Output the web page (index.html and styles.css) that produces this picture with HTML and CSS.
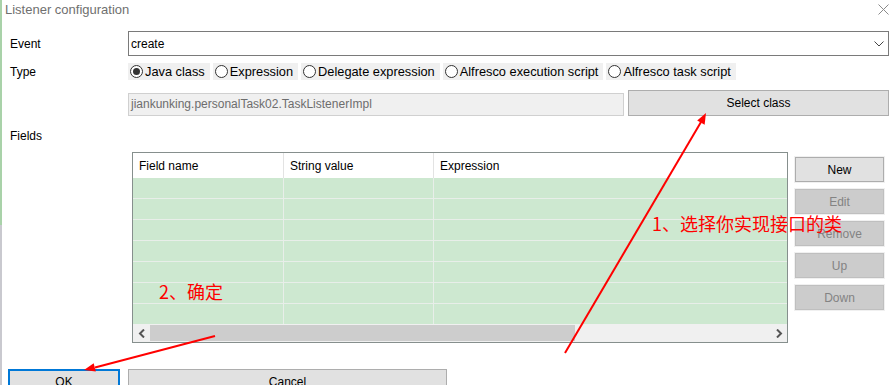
FILE: index.html
```html
<!DOCTYPE html>
<html lang="en">
<head>
    <meta charset="UTF-8">
    <title>Listener configuration</title>
    <link rel="stylesheet" href="styles.css">
</head>
<body>
    <div class="window">
        <div class="edge"></div>
        <div class="dialog">
            <div class="titlebar">
                <span class="title">Listener configuration</span>
                <span class="close">
                    <svg width="11" height="11" viewBox="0 0 11 11"><path d="M0.5 0.5 L10.5 10.5 M10.5 0.5 L0.5 10.5" stroke="#8a8a8a" stroke-width="1" fill="none"/></svg>
                </span>
            </div>

            <div class="form">
                <div class="row row-event">
                    <div class="label">Event</div>
                    <div class="combo">
                        <span>create</span>
                        <svg class="chevron" width="10" height="6" viewBox="0 0 10 6"><path d="M0.5 0.5 L5 5 L9.5 0.5" stroke="#444" stroke-width="1" fill="none"/></svg>
                    </div>
                </div>

                <div class="row row-type">
                    <div class="label">Type</div>
                    <div class="radios">
                        <label class="radio"><span class="dot checked"></span>Java class</label>
                        <label class="radio"><span class="dot"></span>Expression</label>
                        <label class="radio"><span class="dot"></span>Delegate expression</label>
                        <label class="radio"><span class="dot"></span>Alfresco execution script</label>
                        <label class="radio"><span class="dot"></span>Alfresco task script</label>
                    </div>
                </div>

                <div class="row row-class">
                    <div class="label"></div>
                    <div class="class-field">jiankunking.personalTask02.TaskListenerImpl</div>
                    <button class="btn select-btn">Select class</button>
                </div>

                <div class="fields-label">Fields</div>

                <div class="fields-body">
                    <div class="grid">
                        <div class="grid-head">
                            <div class="cell c1">Field name</div>
                            <div class="cell c2">String value</div>
                            <div class="cell c3">Expression</div>
                        </div>
                        <div class="grid-rows" id="rows"></div>
                        <div class="hscroll">
                            <span class="arrow">
                                <svg width="8" height="9" viewBox="0 0 8 9"><path d="M6 0.5 L2 4.5 L6 8.5" stroke="#555" stroke-width="2" fill="none"/></svg>
                            </span>
                            <span class="thumb"></span>
                            <span class="track"></span>
                            <span class="arrow">
                                <svg width="8" height="9" viewBox="0 0 8 9"><path d="M2 0.5 L6 4.5 L2 8.5" stroke="#555" stroke-width="2" fill="none"/></svg>
                            </span>
                        </div>
                    </div>
                    <div class="side-buttons">
                        <button class="btn side">New</button>
                        <button class="btn side disabled">Edit</button>
                        <button class="btn side disabled">Remove</button>
                        <button class="btn side disabled">Up</button>
                        <button class="btn side disabled">Down</button>
                    </div>
                </div>
            </div>

            <div class="footer">
                <button class="btn ok-btn">OK</button>
                <button class="btn cancel-btn">Cancel</button>
            </div>
        </div>
    </div>

    <!-- annotations drawn on top of the screenshot -->
    <svg class="marks" width="895" height="385" viewBox="0 0 895 385">
        <line x1="565" y1="353" x2="701" y2="122" stroke="#ff0000" stroke-width="2"/>
        <polygon points="706,113 704.6,124.8 697.2,120.4" fill="#ff0000"/>
        <line x1="215" y1="336" x2="95" y2="367.5" stroke="#ff0000" stroke-width="2"/>
        <polygon points="84,370 93.7,363.3 95.8,371.6" fill="#ff0000"/>
    </svg>
    <div class="note note-1">1、选择你实现接口的类</div>
    <div class="note note-2">2、确定</div>

    <script>
        const rows = document.getElementById('rows');
        for (let i = 0; i < 7; i++) {
            rows.innerHTML += '<div class="grid-row"><div class="cell c1"></div><div class="cell c2"></div><div class="cell c3"></div></div>';
        }
    </script>
</body>
</html>
```

FILE: styles.css
```css
body {
    margin: 0;
    padding: 0;
    width: 895px;
    height: 385px;
    overflow: hidden;
    background: #fff;
    font-family: "Liberation Sans", Arial, sans-serif;
    font-size: 12px;
    color: #000;
    position: relative;
}
.window {
    display: flex;
    height: 385px;
}
.edge {
    width: 2px;
    border-right: 1px solid #fff;
    background: linear-gradient(#a9d2a9 0, #a9d2a9 225px, #c9c9cf 225px, #c9c9cf 100%);
}
.dialog {
    flex: 1;
    display: flex;
    flex-direction: column;
}
.dialog > * {
    flex-shrink: 0;
}
.titlebar {
    height: 19px;
    display: flex;
    align-items: center;
    justify-content: space-between;
    padding: 0 6px 0 2px;
}
.title {
    color: #6f6f6f;
    font-size: 13px;
}
.close {
    display: flex;
    margin-top: 0;
}
.form {
    padding: 0 6px 0 7px;
}
.row {
    display: flex;
    align-items: center;
}
.label {
    width: 118px;
    flex: none;
}
.row-event {
    margin-top: 12px;
}
.combo {
    flex: 1;
    height: 23px;
    border: 1px solid #7a7a7a;
    display: flex;
    align-items: center;
    justify-content: space-between;
    padding: 0 4px 0 2px;
}
.chevron {
    margin-top: 1px;
}
.row-type {
    margin-top: 7px;
}
.radios {
    display: flex;
    gap: 3px;
}
.radio {
    display: flex;
    align-items: center;
    gap: 2px;
    height: 17px;
    padding: 0 5px 0 2px;
    background: #f0f0f0;
    font-size: 12.8px;
}
.dot {
    width: 11px;
    height: 11px;
    border: 1px solid #333;
    border-radius: 50%;
    background: #fff;
    position: relative;
}
.dot.checked::after {
    content: "";
    position: absolute;
    left: 2px;
    top: 2px;
    width: 7px;
    height: 7px;
    border-radius: 50%;
    background: #333;
}
.row-class {
    margin-top: 10px;
    align-items: flex-start;
    gap: 4px;
}
.row-class .label {
    margin-right: -4px;
}
.class-field {
    width: 492px;
    height: 21px;
    margin-top: 3px;
    border: 1px solid #d0d0d0;
    background: #f0f0f0;
    color: #6d6d6d;
    padding-left: 2px;
    line-height: 21px;
}
.btn {
    font-family: "Liberation Sans", Arial, sans-serif;
    font-size: 12px;
    background: #e1e1e1;
    border: 1px solid #adadad;
    color: #000;
    padding: 0;
}
.select-btn {
    flex: 1;
    height: 26px;
}
.fields-label {
    margin-top: 12px;
    line-height: 16px;
}
.fields-body {
    display: flex;
    gap: 7px;
    margin-top: 8px;
    padding-left: 122px;
}
.grid {
    width: 654px;
    border: 1px solid #868f8d;
    display: flex;
    flex-direction: column;
}
.grid-head {
    display: flex;
    height: 25px;
    background: #fff;
}
.grid-head .cell {
    display: flex;
    align-items: center;
    padding-left: 6px;
}
.cell {
    box-sizing: border-box;
    border-right: 1px solid #e3e3e3;
}
.c1 {
    width: 151px;
}
.c2 {
    width: 150px;
}
.c3 {
    flex: 1;
    border-right: none;
}
.grid-row {
    display: flex;
    height: 20px;
    background: #cde8d0;
    border-top: 1px solid #e8eee9;
}
.grid-row:first-child {
    border-top: none;
}
.grid-row .cell {
    border-right-color: #e8eee9;
}
.grid-row .c3 {
    border-right: none;
}
.hscroll {
    height: 18px;
    display: flex;
    align-items: center;
    background: #f0f0f0;
}
.arrow {
    width: 17px;
    display: flex;
    justify-content: center;
}
.thumb {
    width: 425px;
    height: 16px;
    background: #cdcdcd;
}
.track {
    flex: 1;
}
.side-buttons {
    display: flex;
    flex-direction: column;
    gap: 7px;
    margin-top: 5px;
}
.side {
    width: 89px;
    height: 25px;
    box-shadow: 0 0 0 1px #f0f0f0;
}
.side.disabled {
    background: #cccccc;
    border-color: #bfbfbf;
    color: #838383;
}
.footer {
    display: flex;
    gap: 8px;
    margin-top: 26px;
    padding-left: 5px;
}
.ok-btn {
    width: 112px;
    height: 26px;
    border: 2px solid #0078d7;
}
.cancel-btn {
    width: 319px;
    height: 26px;
}
.marks {
    position: absolute;
    left: 0;
    top: 0;
    pointer-events: none;
}
.note {
    position: absolute;
    color: #ff0000;
    font-family: "Noto Sans CJK SC", sans-serif;
    font-size: 18px;
    line-height: 20px;
}
.note-1 {
    left: 652px;
    top: 213px;
}
.note-2 {
    left: 159px;
    top: 281px;
}
```
